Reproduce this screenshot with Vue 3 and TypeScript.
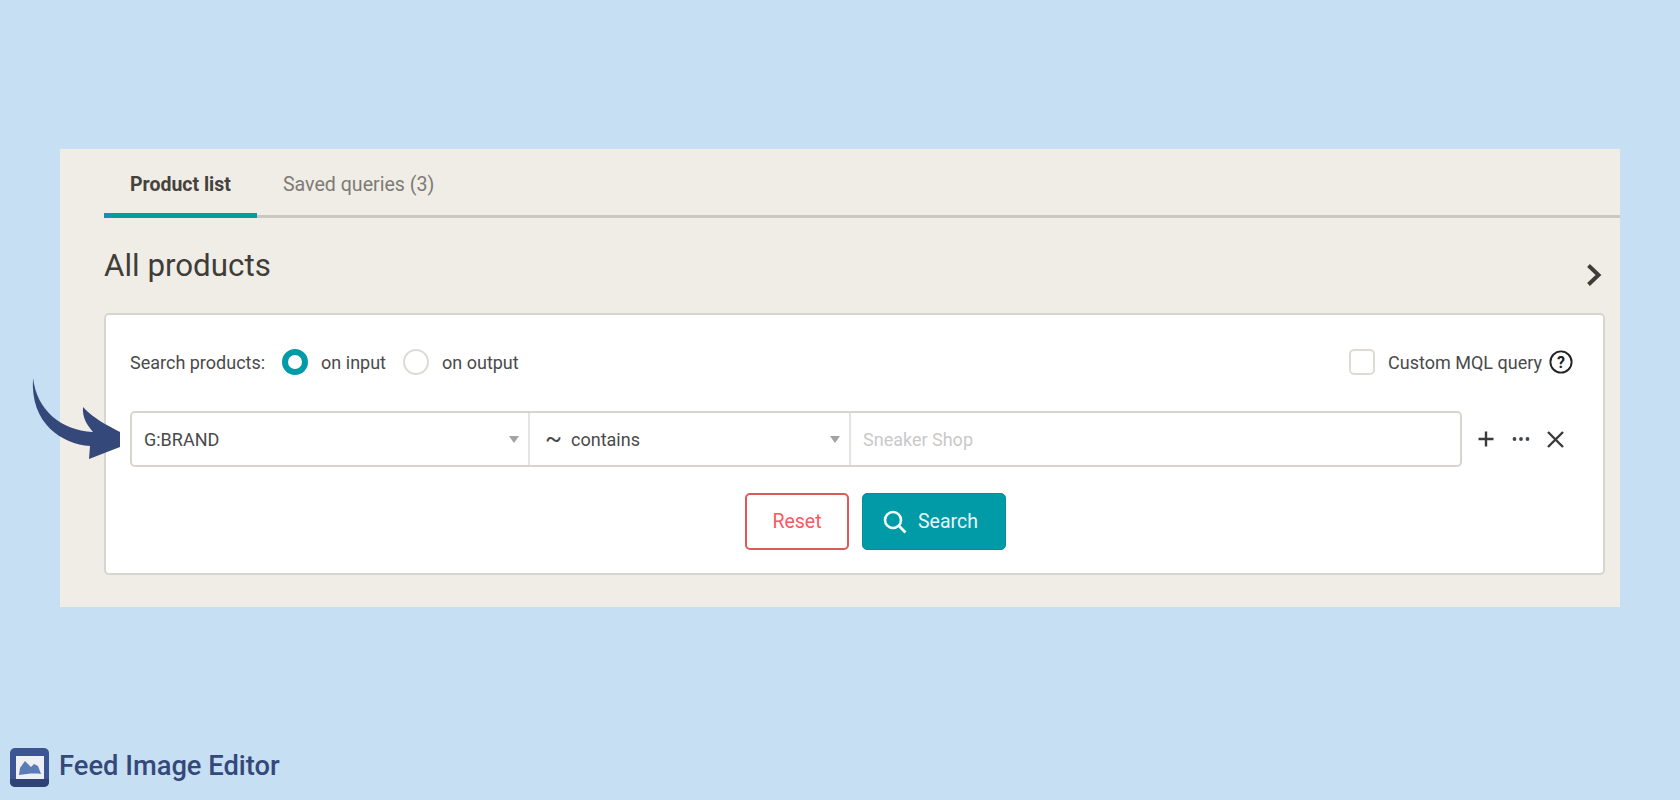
<script setup lang="ts">
import { ref } from 'vue'

const tabs = ['Product list', 'Saved queries (3)']
const activeTab = ref('Product list')
const searchOn = ref('input')
</script>

<template>
  <div class="page">
    <main class="panel">
      <nav class="tabs">
        <button
          v-for="tab in tabs"
          :key="tab"
          class="tab"
          :class="{ active: tab === activeTab }"
          @click="activeTab = tab"
        >
          {{ tab }}
        </button>
      </nav>

      <div class="title-row">
        <h1>All products</h1>
        <svg class="chevron" width="16" height="24" viewBox="0 0 16 24">
          <path d="M2.5 2.5 L12.5 12 L2.5 21.5" fill="none" stroke="#3f3d39" stroke-width="4" />
        </svg>
      </div>

      <section class="card">
        <div class="options">
          <span class="label">Search products:</span>
          <span class="radio" :class="{ on: searchOn === 'input' }"></span>
          <span class="radio-text">on input</span>
          <span class="radio" :class="{ on: searchOn === 'output' }"></span>
          <span class="radio-text">on output</span>
          <span class="check"></span>
          <span class="check-text">Custom MQL query</span>
          <svg class="help" width="24" height="24" viewBox="0 0 24 24">
            <circle cx="12" cy="12" r="10.6" fill="none" stroke="#222" stroke-width="1.9" />
            <text x="12" y="17.5" text-anchor="middle" class="help-mark">?</text>
          </svg>
        </div>

        <div class="query-row">
          <div class="query">
            <div class="cell field">
              <span>G:BRAND</span>
              <i class="caret"></i>
            </div>
            <div class="cell operator">
              <span class="op-label"><b class="tilde">~</b>contains</span>
              <i class="caret"></i>
            </div>
            <div class="cell value">Sneaker Shop</div>
          </div>
          <div class="actions">
            <svg width="16" height="16" viewBox="0 0 16 16">
              <path d="M8 0.5 V15.5 M0.5 8 H15.5" stroke="#3a3a3a" stroke-width="2.4" />
            </svg>
            <svg width="18" height="16" viewBox="0 0 18 16">
              <circle cx="2.5" cy="8" r="1.9" fill="#3f4650" />
              <circle cx="9" cy="8" r="1.9" fill="#3f4650" />
              <circle cx="15.5" cy="8" r="1.9" fill="#3f4650" />
            </svg>
            <svg width="17" height="17" viewBox="0 0 17 17">
              <path d="M1 1 L16 16 M16 1 L1 16" stroke="#3a3a3a" stroke-width="2.4" />
            </svg>
          </div>
        </div>

        <div class="buttons">
          <button class="btn reset">Reset</button>
          <button class="btn search">
            <svg width="24" height="24" viewBox="0 0 24 24">
              <circle cx="10" cy="10" r="8" fill="none" stroke="#f2fbfc" stroke-width="2.6" />
              <path d="M15.8 15.8 L22.5 22.5" stroke="#f2fbfc" stroke-width="2.8" />
            </svg>
            Search
          </button>
        </div>
      </section>
    </main>

    <footer class="brand">
      <svg width="39" height="39" viewBox="0 0 39 39">
        <rect width="39" height="39" rx="5" fill="#3c5694" />
        <path d="M0 31 H39 V34 a5 5 0 0 1 -5 5 H5 a5 5 0 0 1 -5 -5 Z" fill="#2f4474" />
        <rect x="6" y="8" width="28" height="23" fill="#eef0f3" />
        <path d="M9 27 L10 20 L15 13 L21 19 L24 16 L28 18 L31 26 C24 25 16 26 9 27 Z" fill="#5a7db8" />
      </svg>
      <span>Feed Image Editor</span>
    </footer>

    <svg class="arrow" width="100" height="90" viewBox="25 372 100 90">
      <path
        d="M33 378 C37 410 60 430 93 432 C87 425 82 417 83 407 C94 419 107 425 120 432 L120 447 L89 459 L90 446 C62 444 30 424 33 378 Z"
        fill="#34497a"
      />
    </svg>
  </div>
</template>

<style scoped>
.page {
  position: relative;
  height: 800px;
  padding-top: 149px;
  box-sizing: border-box;
  overflow: hidden;
  background: #c7dff2;
  font-family: Roboto, 'Liberation Sans', sans-serif;
  color: #3f3d39;
}

.panel {
  margin-left: 60px;
  width: 1560px;
  height: 458px;
  padding-left: 44px;
  box-sizing: border-box;
  background: #f0ede6;
}

/* Tabs */
.tabs {
  display: flex;
  height: 69px;
  border-bottom: 3px solid #cbc8c3;
  box-sizing: border-box;
}

.tab {
  height: 69px;
  padding: 7px 26px 0;
  border: none;
  border-bottom: 5px solid transparent;
  background: none;
  box-sizing: border-box;
  font-family: inherit;
  font-size: 19.6px;
  color: #7d7b76;
}

.tab.active {
  border-bottom-color: #019ba8;
  font-size: 19.5px;
  font-weight: 700;
  color: #45423e;
}

.title-row {
  display: flex;
  justify-content: space-between;
  height: 95px;
}

h1 {
  margin: 31px 0 0;
  font-size: 31.3px;
  line-height: 34px;
  font-weight: 400;
  color: #3f3d39;
}

.chevron {
  margin: 45px 0 0 0;
  position: relative;
  right: 18px;
}

/* Card */
.card {
  width: 1501px;
  height: 262px;
  box-sizing: border-box;
  padding: 0 24px;
  background: #fff;
  border: 2px solid #d8d5cf;
  border-radius: 5px;
}

.options {
  display: flex;
  align-items: center;
  height: 94px;
  margin-bottom: 2px;
  font-size: 18px;
  color: #4a4a4a;
}

.label {
  margin-right: 17px;
}

.radio {
  width: 26px;
  height: 26px;
  margin-right: 13px;
  box-sizing: border-box;
  border: 2px solid #dedbd6;
  border-radius: 50%;
}

.radio.on {
  border: 6px solid #019ba8;
}

.radio-text {
  margin-right: 17px;
}

.check {
  width: 26px;
  height: 26px;
  margin-left: auto;
  margin-right: 13px;
  box-sizing: border-box;
  border: 2px solid #dedbd6;
  border-radius: 5px;
}

.check-text {
  margin-right: 7px;
}

.help {
  margin-right: 6px;
}

.help-mark {
  font-size: 16px;
  font-weight: 700;
  fill: #222;
}

/* Query row */
.query-row {
  display: flex;
  align-items: center;
}

.query {
  display: flex;
  width: 1332px;
  height: 56px;
  box-sizing: border-box;
  border: 2px solid #d8d5cf;
  border-radius: 5px;
  font-size: 18px;
  color: #4a4a4a;
}

.cell {
  display: flex;
  align-items: center;
  justify-content: space-between;
  box-sizing: border-box;
}

.field {
  width: 398px;
  padding: 0 9px 0 12px;
  border-right: 2px solid #e6e4e0;
}

.operator {
  width: 321px;
  padding: 0 9px 0 15px;
  border-right: 2px solid #e6e4e0;
}

.op-label {
  display: flex;
  align-items: center;
}

.tilde {
  margin-right: 9px;
  font-weight: 400;
  font-size: 25px;
  line-height: 22px;
}

.value {
  flex: 1;
  padding-left: 12px;
  color: #c9c9c9;
}

.caret {
  width: 0;
  height: 0;
  border-left: 5px solid transparent;
  border-right: 5px solid transparent;
  border-top: 7px solid #a3a3a3;
}

.actions {
  display: flex;
  align-items: center;
  gap: 17.5px;
  margin-left: 16px;
}

/* Buttons */
.buttons {
  display: flex;
  justify-content: center;
  gap: 13px;
  margin-top: 26px;
  padding-left: 42px;
}

.btn {
  height: 57px;
  box-sizing: border-box;
  border-radius: 5px;
  font-family: inherit;
  font-size: 19.5px;
}

.reset {
  width: 104px;
  background: #fff;
  border: 2px solid #dc5a5a;
  color: #f9595f;
}

.search {
  display: flex;
  align-items: center;
  gap: 11px;
  width: 144px;
  padding: 0 20px;
  background: #019ba8;
  border: 1px solid #0a8b97;
  color: #e6f6f7;
}

/* Footer brand */
.brand {
  display: flex;
  align-items: center;
  gap: 10px;
  margin: 141px 0 0 10px;
  font-size: 27.3px;
  font-weight: 500;
  color: #34497a;
}

.brand span {
  padding-bottom: 3px;
}

.arrow {
  position: absolute;
  left: 25px;
  top: 372px;
}
</style>
